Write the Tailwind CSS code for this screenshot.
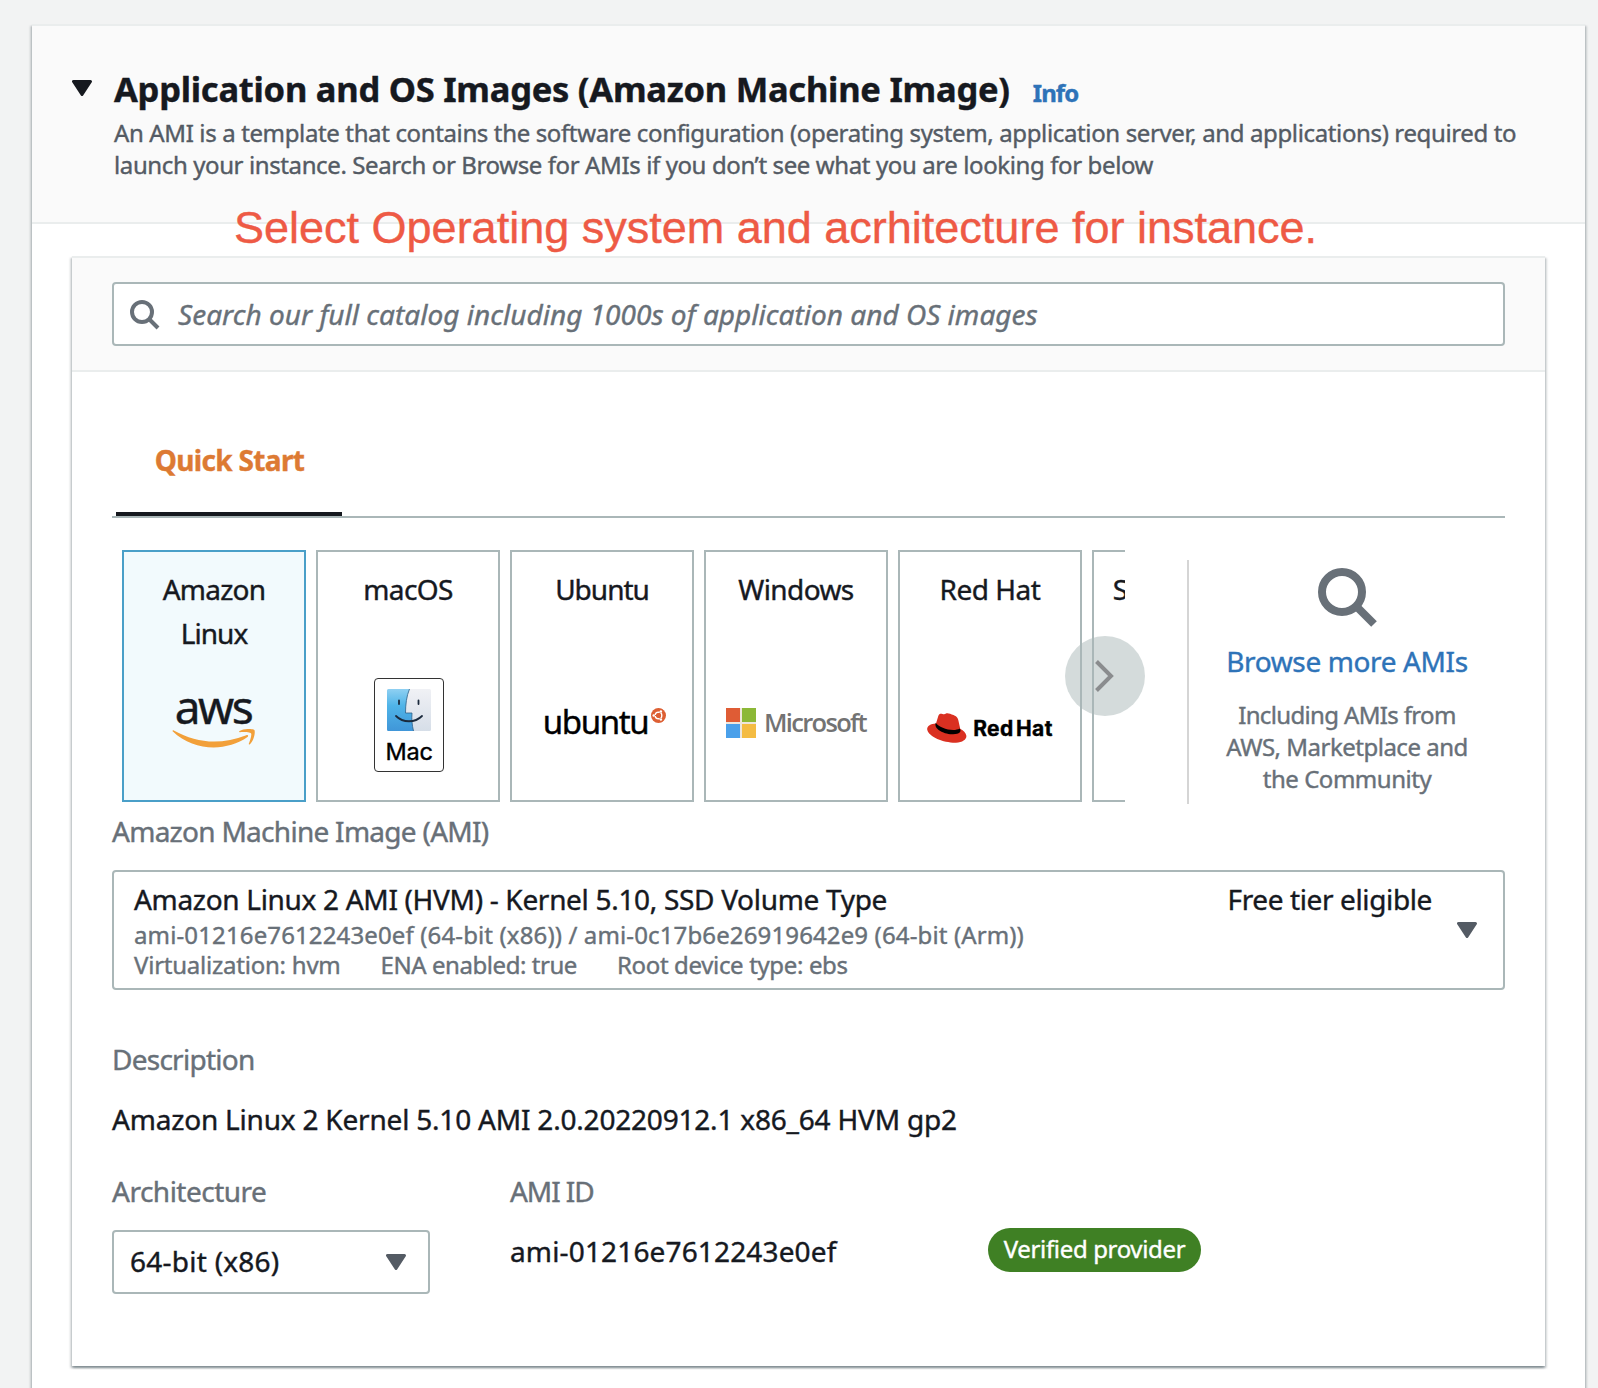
<!DOCTYPE html>
<html lang="en">
<head>
<meta charset="utf-8">
<title>Launch an instance</title>
<script src="https://cdn.jsdelivr.net/npm/@tailwindcss/browser@4"></script>
</head>
<body class="h-[1388px] overflow-hidden bg-[#f2f3f3] font-['Noto_Sans',sans-serif] text-[28px] text-[#16191f] whitespace-nowrap [-webkit-text-stroke-width:0.4px]">
<section class="relative mt-6 ml-8 h-[1400px] w-[1553px] border-t-2 border-[#eaeded] bg-white shadow-[0_2px_2px_0_rgba(0,28,36,0.3),2px_2px_2px_0_rgba(0,28,36,0.15),-2px_2px_2px_0_rgba(0,28,36,0.15)]">
  <header class="flex h-[198px] gap-[22px] border-b-2 border-[#eaeded] bg-[#fafafa] pt-[41px] pl-10">
    <svg class="mt-[13px] h-4 w-5 shrink-0" viewBox="0 0 20 16"><path d="M1.500 1.500h17L10 14.500z" fill="#16191f" stroke="#16191f" stroke-width="3" stroke-linejoin="round"/></svg>
    <div>
      <h2 class="flex h-11 items-baseline gap-[23px] text-[34.5px] leading-[44px] font-bold tracking-[-0.25px]"><span>Application and OS Images (Amazon Machine Image)</span><a class="text-2xl leading-8 font-bold tracking-[-0.93px] text-[#2e73b8]">Info</a></h2>
      <p class="mt-1.5 text-2xl leading-8 text-[#545b64]"><span class="tracking-[-0.365px]">An AMI is a template that contains the software configuration (operating system, application server, and applications) required to</span><br><span class="tracking-[-0.39px]">launch your instance. Search or Browse for AMIs if you don’t see what you are looking for below</span></p>
    </div>
  </header>
  <p class="absolute top-[176px] left-[202px] font-['Liberation_Sans',Arial,sans-serif] text-[45px] leading-[52px] text-[#ee5a45]">Select Operating system and acrhitecture for instance.</p>

  <div class="mt-8 ml-10 h-[1110px] w-[1473px] border-t-2 border-[#eaeded] bg-white shadow-[0_2px_2px_0_rgba(0,28,36,0.3),2px_2px_2px_0_rgba(0,28,36,0.15),-2px_2px_2px_0_rgba(0,28,36,0.15)]">
    <div class="border-b-2 border-[#eaeded] bg-[#fafafa] px-10 py-6">
      <div class="flex h-16 items-center rounded-[4px] border-2 border-[#aab7b8] bg-white pl-4 tracking-[0.02px] text-[#687078] italic">
        <svg class="mt-0.5 mr-[18px] size-[30px]" viewBox="0 0 30 30" fill="none" stroke="#687078" stroke-width="4"><circle cx="12" cy="12" r="10"/><path d="M19 19l9 9"/></svg>
        <span>Search our full catalog including 1000s of application and OS images</span>
      </div>
    </div>

    <div class="px-10">
      <div class="flex h-[146px] items-end border-b-2 border-[#aab7b8]">
        <div class="ml-1 flex h-[76px] w-[226px] justify-center border-b-4 border-[#16191f] pl-px font-bold leading-10 tracking-[-0.67px] text-[#dd7a33]">Quick Start</div>
      </div>

      <div class="relative mt-8 flex h-[254px] pl-2.5">
        <div class="flex h-[252px] w-[1003px] gap-2.5 overflow-hidden text-center leading-[44px]">
          <div class="flex w-[184px] shrink-0 flex-col items-center border-2 border-[#4a9fc8] bg-[#f2fafd] pt-[15px]">
            <span class="tracking-[-0.78px]">Amazon</span><span class="tracking-[-0.97px]">Linux</span>
            <span class="mt-[26px] -ml-0.5 text-[46px] leading-[50px] tracking-[-2.5px]">aws</span>
            <svg class="-mt-0.5 h-5 w-[84px] shrink-0" viewBox="0 0 84 20" fill="#f2a03a"><path d="M.6 2.200C.2 1.600 1 1 1.800 1.500 25 14.500 49 16 74.300 6.200c1.500-.6 2.600.9 1.200 1.900C54 23 22 22.500.6 2.200z"/><path d="M68 3.200C67 3.300 66.800 2.600 67.600 2.100 71.800-.7 81.300-.4 82.400 1c1.100 1.400-.2 10.600-4.500 14.200-.7.600-1.400.3-1.100-.5 1-2.400 3.200-8.500 2.300-10.300C78 3 70.600 3 68 3.200z"/></svg>
          </div>
          <div class="flex w-[184px] shrink-0 flex-col items-center border-2 border-[#aab7b8] pt-[15px]">
            <span class="tracking-[-0.6px]">macOS</span>
            <div class="mt-[67px] ml-0.5 flex h-[94px] w-[70px] flex-col items-center rounded-[4px] border border-[#333] bg-white pt-2.5 font-['Inter',sans-serif] text-[23.5px] text-black">
              <svg class="h-[42px] w-11 shrink-0" viewBox="0 0 44 42"><defs><linearGradient id="b" x2="0" y2="1"><stop stop-color="#8fd0f2"/><stop offset=".4" stop-color="#4fb4e8"/><stop offset="1" stop-color="#4096d8"/></linearGradient><linearGradient id="g" x2="0" y2="1"><stop stop-color="#f0f1f5"/><stop offset="1" stop-color="#d6dee8"/></linearGradient></defs><rect width="44" height="42" rx="1.500" fill="url(#g)"/><path d="M1.500 0H22.500C19.500 7 18.500 16 18.500 24H25C24.500 30 25 36 26.500 42H1.500Q0 42 0 40.500V1.500Q0 0 1.500 0z" fill="url(#b)"/><path d="M22.500 0C19.500 7 18.500 16 18.500 24H25C24.500 30 25 36 26.500 42" fill="none" stroke="#2d5f86" stroke-width=".8"/><path d="M12 11.500v3.500M31.500 11.500v3.500M9 27c7 7 19 7 26 0" fill="none" stroke="#1b2a3c" stroke-width="1.800" stroke-linecap="round"/></svg>
              <span class="mt-[5px] leading-8 tracking-[-0.2px]">Mac</span>
            </div>
          </div>
          <div class="flex w-[184px] shrink-0 flex-col items-center border-2 border-[#aab7b8] pt-[15px]">
            <span class="tracking-[-1px]">Ubuntu</span>
            <div class="mt-[91px] ml-[5px] flex items-start gap-[3px] text-[33px] leading-10 tracking-[-1.4px] text-black"><span>ubuntu</span><svg class="mt-1.5 size-[15px]" viewBox="0 0 15 15"><circle cx="7.500" cy="7.500" r="7.500" fill="#dd5f33"/><circle cx="7.500" cy="7.500" r="3.300" fill="none" stroke="#fff" stroke-width="1.400"/><path d="M7.500 7.500H0M7.500 7.500l3.700-6.500M7.500 7.500l3.700 6.500" stroke="#dd5f33" stroke-width="1"/><circle cx="7.500" cy="7.500" r="2.400" fill="#dd5f33"/><g fill="#fff"><circle cx="2.700" cy="7.500" r="1.200"/><circle cx="9.900" cy="3.400" r="1.200"/><circle cx="9.900" cy="11.600" r="1.200"/></g></svg></div>
          </div>
          <div class="flex w-[184px] shrink-0 flex-col items-center border-2 border-[#aab7b8] pt-[15px]">
            <span class="tracking-[-0.6px]">Windows</span>
            <div class="mt-[97px] flex items-start gap-2 font-['Open_Sans',sans-serif] text-[25.5px] leading-[30px] font-semibold tracking-[-1.7px] text-[#737373] [-webkit-text-stroke-width:0px]"><svg class="size-[30px]" viewBox="0 0 30 30"><path fill="#eee6dc" d="M0 0h30v30H0z"/><path fill="#df5c35" d="M0 0h14v14H0z"/><path fill="#8cb837" d="M16 0h14v14H16z"/><path fill="#4aa0ea" d="M0 16h14v14H0z"/><path fill="#f4bc43" d="M16 16h14v14H16z"/></svg><span class="-mt-px">Microsoft</span></div>
          </div>
          <div class="flex w-[184px] shrink-0 flex-col items-center border-2 border-[#aab7b8] pt-[15px]">
            <span class="tracking-[-0.5px]">Red Hat</span>
            <div class="mt-[101px] flex items-center gap-1.5 font-['Inter',sans-serif] text-[21px] leading-[30px] font-bold tracking-[0.4px] text-black"><svg class="h-[30px] w-10" viewBox="0 0 40 30"><path d="M9 10.500C3 10.800-.5 13.500.3 17 2 24 17 30 29 29.700 36 29.500 40 26 39.300 22.500 38.700 19.500 36.500 17.500 33.500 16L9 10.500z" fill="#da3021"/><path d="M9 10.500 11.300 3C12 .8 13.500.5 15.500 1c1.500.4 2.500.3 3.500-.5 1.400-.9 4.300.2 7.500 1.600 4 1.700 4.500 3.500 5 5.800L33.500 17c-4 4-20 2-24.500-6.500z" fill="#da3021"/><path d="M8.800 9.800C12 15 26 19.500 32.800 15.600c2 3.400-.3 6-7.800 5.700C15.500 21 6.500 15.500 8.800 9.800z" fill="#000"/></svg><span class="mt-0.5 [word-spacing:-3px]">Red Hat</span></div>
          </div>
          <div class="flex w-[184px] shrink-0 flex-col items-center border-2 border-[#aab7b8] pt-[15px]"><span class="tracking-[-0.29px]">SUSE Linux</span></div>
        </div>
        <div class="absolute top-[86px] left-[953px] size-20 rounded-full bg-[#aab7b8]/50"><svg class="size-20" viewBox="0 0 80 80" fill="none" stroke="#8a8c8e" stroke-width="4"><path d="M31.500 25.500 46 40 31.500 54.500"/></svg></div>
        <div class="mt-2.5 ml-[62px] flex w-[318px] shrink-0 flex-col items-center border-l-2 border-[#d5d5d5] text-2xl leading-8 text-[#687078]">
          <svg class="mt-2 ml-px size-[60px] shrink-0" viewBox="0 0 60 60" fill="none" stroke="#687078" stroke-width="8"><circle cx="24" cy="24" r="20"/><path d="m38 38 18 18"/></svg>
          <a class="mt-[17px] text-[28px] leading-8 tracking-[-0.38px] text-[#2e73b8]">Browse more AMIs</a>
          <span class="mt-[22px] tracking-[-0.65px]">Including AMIs from</span><span class="tracking-[-0.5px]">AWS, Marketplace and</span><span class="tracking-[-0.47px]">the Community</span>
        </div>
      </div>

      <div class="mt-[11px] leading-8 tracking-[-0.72px] text-[#687078]">Amazon Machine Image (AMI)</div>
      <div class="mt-[23px] flex h-[120px] rounded-[4px] border-2 border-[#aab7b8] pl-5">
        <div class="pt-2.5 text-2xl leading-[30px] text-[#687078]">
          <div class="text-[28px] leading-[34px] tracking-[-0.31px] text-[#16191f]">Amazon Linux 2 AMI (HVM) - Kernel 5.10, SSD Volume Type</div>
          <div class="mt-1 tracking-[0.13px]">ami-01216e7612243e0ef (64-bit (x86)) / ami-0c17b6e26919642e9 (64-bit (Arm))</div>
          <div class="flex gap-10"><span class="tracking-[-0.23px]">Virtualization: hvm</span><span class="tracking-[-0.44px]">ENA enabled: true</span><span class="tracking-[-0.35px]">Root device type: ebs</span></div>
        </div>
        <span class="mt-2.5 mr-[25px] ml-auto leading-[34px] tracking-[-0.38px]">Free tier eligible</span>
        <svg class="mt-[50px] mr-[26px] h-4 w-5" viewBox="0 0 20 16"><path d="M1.500 1.500h17L10 14.500z" fill="#545b64" stroke="#545b64" stroke-width="3" stroke-linejoin="round"/></svg>
      </div>

      <div class="mt-[53px] leading-8 tracking-[-0.74px] text-[#687078]">Description</div>
      <div class="mt-7 leading-8 tracking-[-0.2px]">Amazon Linux 2 Kernel 5.10 AMI 2.0.20220912.1 x86_64 HVM gp2</div>
      <div class="mt-10 flex">
        <div class="w-[398px]">
          <div class="leading-8 tracking-[-0.5px] text-[#687078]">Architecture</div>
          <div class="mt-[23px] flex h-16 w-[318px] items-center justify-between rounded-[4px] border-2 border-[#aab7b8] pr-[22px] pl-4"><span class="-mt-0.5 tracking-[0.25px]">64-bit (x86)</span><svg class="h-4 w-5" viewBox="0 0 20 16"><path d="M1.500 1.500h17L10 14.500z" fill="#545b64" stroke="#545b64" stroke-width="3" stroke-linejoin="round"/></svg></div>
        </div>
        <div class="w-[478px] leading-8">
          <div class="tracking-[-1.08px] text-[#687078]">AMI ID</div>
          <div class="mt-7 tracking-[0.15px]">ami-01216e7612243e0ef</div>
        </div>
        <div class="mt-[53px] flex h-11 w-[213px] items-center justify-center rounded-[22px] bg-[#3f8024] pb-0.5 text-2xl tracking-[-0.35px] text-white">Verified provider</div>
      </div>
    </div>
  </div>
</section>
</body>
</html>
